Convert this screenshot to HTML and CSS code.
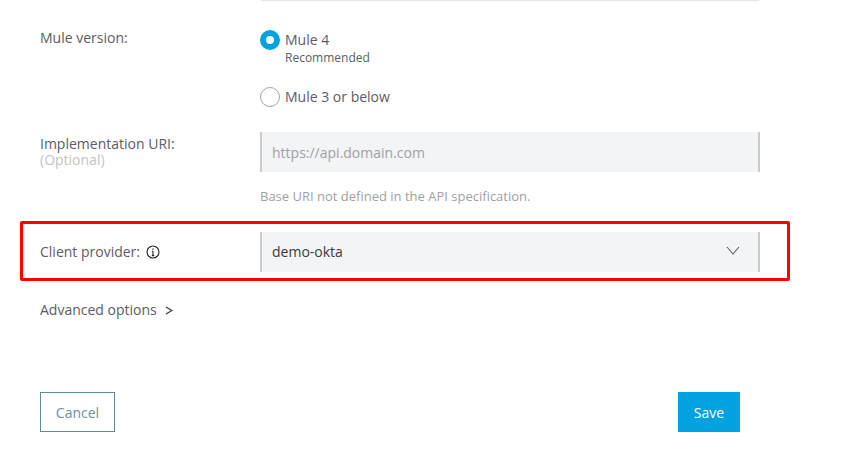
FILE: index.html
```html
<!DOCTYPE html>
<html lang="en">
<head>
    <meta charset="UTF-8">
    <meta name="viewport" content="width=device-width, initial-scale=1.0">
    <title>API settings</title>
    <link rel="stylesheet" href="styles.css">
</head>
<body>
    <div class="form">
        <div class="top-line"></div>

        <div class="row version-row">
            <div class="label">Mule version:</div>
            <div class="options">
                <div class="radio-option">
                    <span class="radio checked"></span>
                    <div>
                        <div class="radio-text">Mule 4</div>
                        <div class="radio-note">Recommended</div>
                    </div>
                </div>
                <div class="radio-option">
                    <span class="radio"></span>
                    <div class="radio-text">Mule 3 or below</div>
                </div>
            </div>
        </div>

        <div class="row uri-row">
            <div class="label">
                Implementation URI:
                <div class="optional">(Optional)</div>
            </div>
            <div class="field placeholder">https://api.domain.com</div>
        </div>
        <div class="hint">Base URI not defined in the API specification.</div>

        <div class="row client-row">
            <div class="label client-label">
                Client provider:
                <svg class="info" width="14" height="14" viewBox="0 0 14 14" fill="none" stroke="#222" stroke-width="1.1">
                    <circle cx="7" cy="7" r="6"/>
                    <path d="M7 6.2V10.6M5.8 10.6H8.2M5.9 6.2H7"/>
                    <path d="M7 3.4V4.7" stroke-width="1.3"/>
                </svg>
            </div>
            <div class="field select">
                demo-okta
                <svg class="select-arrow" width="14" height="9" viewBox="0 0 14 9" fill="none" stroke="#5c5c66" stroke-width="1.1">
                    <path d="M1 1L7 8L13 1"/>
                </svg>
            </div>
        </div>

        <div class="advanced">
            Advanced options
            <svg width="8" height="9" viewBox="0 0 8 9" fill="none" stroke="#333" stroke-width="1.2">
                <path d="M1 1L7 4.5L1 8"/>
            </svg>
        </div>

        <div class="buttons">
            <button class="cancel">Cancel</button>
            <button class="save">Save</button>
        </div>
    </div>
</body>
</html>
```

FILE: styles.css
```css
* {
    box-sizing: border-box;
}
body {
    margin: 0;
    background: #fff;
    font-family: "Open Sans", sans-serif;
    font-size: 14px;
    color: #5c5c66;
}
.form {
    width: 760px;
    padding-left: 40px;
}
.top-line {
    height: 1px;
    margin-left: 221px;
    width: 498px;
    background: #e6e6e6;
}
.row {
    display: flex;
}
.label {
    width: 220px;
    flex-shrink: 0;
    line-height: 16px;
}
.version-row {
    padding-top: 29px;
}
.options {
    display: flex;
    flex-direction: column;
    gap: 21px;
}
.radio-option {
    display: flex;
    gap: 5px;
}
.radio {
    width: 20px;
    height: 20px;
    border-radius: 50%;
    border: 1px solid #a3a3a9;
    flex-shrink: 0;
}
.radio.checked {
    border: 6px solid #00a2df;
    background: #fff;
}
.radio-text {
    line-height: 20px;
}
.radio-note {
    font-size: 12px;
    line-height: 16px;
}
.uri-row {
    margin-top: 25px;
}
.uri-row .label {
    padding-top: 4px;
}
.optional {
    color: #c2c2c6;
}
.field {
    width: 500px;
    height: 40px;
    padding: 0 12px 0 12px;
    display: flex;
    align-items: center;
    background: #f3f4f6;
    border-left: 2px solid #cacbcf;
    border-right: 2px solid #cacbcf;
}
.placeholder {
    padding-left: 10px;
    color: #a0a0a8;
}
.hint {
    margin: 15px 0 0 220px;
    line-height: 18px;
    font-size: 13px;
    color: #a0a0a8;
}
.client-row {
    width: 770px;
    height: 60px;
    margin: 16px 0 0 -20px;
    padding: 8px 0 0 17px;
    border: 3px solid #f00;
    border-radius: 2px;
}
.client-label {
    display: flex;
    align-items: center;
    gap: 6px;
    height: 40px;
}
.select {
    justify-content: space-between;
    padding-left: 10px;
    padding-right: 18px;
    padding-bottom: 2px;
    color: #3a3a42;
}
.select-arrow {
    margin-bottom: 1px;
}
.advanced {
    display: flex;
    align-items: center;
    gap: 8px;
    margin-top: 20px;
    line-height: 18px;
}
.buttons {
    display: flex;
    justify-content: space-between;
    margin-top: 73px;
    padding-right: 20px;
}
button {
    height: 40px;
    font-family: "Open Sans", sans-serif;
    font-size: 14px;
    border-radius: 0;
}
.cancel {
    width: 75px;
    background: #fff;
    border: 1px solid #5f8a9f;
    color: #6f8fa5;
}
.save {
    width: 62px;
    border: none;
    background: #00a2df;
    color: #fff;
}
```
